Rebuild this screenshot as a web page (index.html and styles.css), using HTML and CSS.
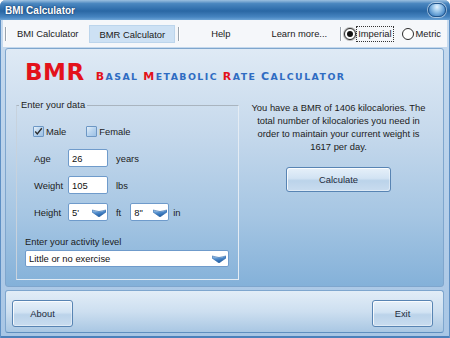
FILE: index.html
```html
<!DOCTYPE html>
<html>
<head>
<meta charset="utf-8">
<link rel="stylesheet" href="styles.css">
</head>
<body>
<div class="window">
  <div class="titlebar">
    <span class="title">BMI Calculator</span>
    <span class="close"></span>
  </div>
  <div class="menubar">
    <span class="sep first"></span>
    <span class="mitem">BMI Calculator</span>
    <span class="mitem tab">BMR Calculator</span>
    <span class="sep after-tab"></span>
    <span class="mitem help">Help</span>
    <span class="mitem learn">Learn more...</span>
    <span class="sep after-learn"></span>
    <span class="radio"><span class="rb checked"></span><span class="rl focus">Imperial</span></span>
    <span class="radio metric"><span class="rb"></span><span class="rl">Metric</span></span>
  </div>
  <div class="main">
    <div class="heading">
      <span class="big">BMR</span>
      <span class="sub"><span class="cap">B</span>ASAL <span class="cap">M</span>ETABOLIC <span class="cap">R</span>ATE <span class="cap blue">C</span>ALCULATOR</span>
    </div>
    <div class="content">
      <fieldset class="group">
        <legend>Enter your data</legend>
        <div class="checks">
          <span class="check"><span class="box"><svg width="11" height="11" viewBox="0 0 11 11"><polyline points="1.5,5.5 4,8.5 9.5,1.5" fill="none" stroke="#2b2b2b" stroke-width="1.6"/></svg></span>Male</span>
          <span class="check female"><span class="box"></span>Female</span>
        </div>
        <div class="fields">
          <span class="lbl">Age</span><span class="input">26</span><span class="unit">years</span>
          <span class="lbl">Weight</span><span class="input">105</span><span class="unit">lbs</span>
          <span class="lbl">Height</span>
          <span class="select"><span>5'</span><svg class="arrow" width="14" height="9" viewBox="0 0 14 9"><defs><linearGradient id="ag" x1="0" y1="0" x2="0.4" y2="1"><stop offset="0" stop-color="#a9cdf0"/><stop offset="0.5" stop-color="#4d89c9"/><stop offset="1" stop-color="#1d5aa0"/></linearGradient></defs><path d="M0,2 Q7,5 14,2 L14,4 L7,9 L0,4 Z" fill="url(#ag)" stroke="#2a64a6" stroke-width="0.6"/></svg></span>
          <span class="unit hrow">ft <span class="select small"><span>8"</span><svg class="arrow" width="14" height="9" viewBox="0 0 14 9"><path d="M0,2 Q7,5 14,2 L14,4 L7,9 L0,4 Z" fill="url(#ag)" stroke="#2a64a6" stroke-width="0.6"/></svg></span><span class="in">in</span></span>
        </div>
        <div class="activity">Enter your activity level</div>
        <span class="select wide"><span>Little or no exercise</span><svg class="arrow" width="14" height="9" viewBox="0 0 14 9"><path d="M0,2 Q7,5 14,2 L14,4 L7,9 L0,4 Z" fill="url(#ag)" stroke="#2a64a6" stroke-width="0.6"/></svg></span>
      </fieldset>
      <div class="result">
        <p class="text">You have a BMR of 1406 kilocalories. The<br>total number of kilocalories you need in<br>order to maintain your current weight is<br>1617 per day.</p>
        <button class="btn calc">Calculate</button>
      </div>
    </div>
  </div>
  <div class="footer">
    <button class="btn small-btn">About</button>
    <button class="btn small-btn">Exit</button>
  </div>
</div>
</body>
</html>
```
FILE: styles.css
```css
html, body {
  margin: 0;
  padding: 0;
}
body {
  width: 450px;
  height: 338px;
  overflow: hidden;
  background: #ffffff;
  font-family: "Liberation Sans", Arial, sans-serif;
  font-size: 9.4px;
  color: #1c1c1c;
}
.window {
  width: 450px;
  height: 338px;
  display: flex;
  flex-direction: column;
  background: linear-gradient(#c9dcef, #a8c6e5);
  border-radius: 6px 6px 0 0;
  box-shadow: inset 1px 0 #5f90c4, inset -1px 0 #5f90c4, inset 0 -2px #4c80ba;
  overflow: hidden;
}
.titlebar {
  height: 20px;
  flex: none;
  display: flex;
  align-items: center;
  justify-content: space-between;
  padding: 0 4px 0 5px;
  background: linear-gradient(#9cc0e0 0, #4a86bf 18%, #2f6dab 48%, #2a67a4 55%, #4684c0 85%, #6ba3d6 100%);
  border-radius: 6px 6px 0 0;
}
.title {
  color: #ffffff;
  font-weight: bold;
  font-size: 10px;
  text-shadow: 0 0 2px #173f6b, 0 0 1px #173f6b;
}
.close {
  width: 18px;
  height: 14px;
  box-sizing: border-box;
  border-radius: 7px;
  border: 1px solid #21548b;
  background: radial-gradient(ellipse at 50% 25%, #e4f2fd 0, #9cc8ec 35%, #4f8dc9 75%, #2e69a8 100%);
  box-shadow: 0 0 0 1px rgba(255, 255, 255, 0.5);
}
.menubar {
  height: 27px;
  flex: none;
  margin: 0 3px;
  padding-left: 2px;
  display: flex;
  align-items: center;
  background: #f5f7fa;
}
.sep {
  width: 1px;
  height: 14px;
  background: #9aa3ad;
  box-shadow: 1px 0 #ffffff;
}
.sep.first { margin-right: 11px; }
.sep.after-tab { margin-left: 3px; }
.sep.after-learn { margin-left: 13px; }
.mitem {
  white-space: nowrap;
  color: #1a1a1a;
}
.tab {
  margin-left: 11px;
  height: 18px;
  line-height: 18px;
  padding: 0 9px;
  box-sizing: border-box;
  background: #cde1f4;
  border: 1px solid #bcd5ec;
}
.help { margin-left: 32px; }
.learn { margin-left: 41px; }
.radio {
  display: flex;
  align-items: center;
  margin-left: 3px;
}
.radio.metric { margin-left: 9px; }
.rb {
  width: 12px;
  height: 12px;
  box-sizing: border-box;
  border-radius: 50%;
  border: 1px solid #2b2b2b;
  background: #ffffff;
  display: flex;
  align-items: center;
  justify-content: center;
}
.rb.checked {
  box-shadow: 0 0 0 1px #b9b9b9;
}
.rb.checked::after {
  content: "";
  width: 6px;
  height: 6px;
  border-radius: 50%;
  background: #111111;
}
.rl {
  margin-left: 1px;
  padding: 1px 1px;
  line-height: 12px;
}
.rl.focus {
  outline: 1px dotted #333333;
}
.main {
  flex: none;
  height: 239px;
  margin: 1px 6px 0 5px;
  box-sizing: border-box;
  border: 1px solid #7fa6cd;
  border-radius: 3px;
  background: linear-gradient(#dfeaf5 0, #c6d9ec 35%, #a6c6e3 70%, #84b1d9 100%);
}
.heading {
  display: flex;
  align-items: baseline;
  height: 22px;
  line-height: 22px;
  margin: 12px 0 0 19px;
}
.big {
  font-family: "DejaVu Sans", sans-serif;
  font-weight: bold;
  font-size: 23px;
  letter-spacing: 0.5px;
  color: #e3121b;
}
.sub {
  margin-left: 11px;
  font-family: "DejaVu Sans", sans-serif;
  font-weight: bold;
  font-size: 9.4px;
  letter-spacing: 1.45px;
  color: #2f6cc2;
}
.sub .cap {
  font-size: 11px;
  color: #e3121b;
}
.sub .cap.blue {
  color: #2f6cc2;
}
.content {
  display: flex;
  margin-top: 16px;
}
.group {
  margin: 0 0 0 10px;
  padding: 0 0 12px 0;
  width: 223px;
  box-sizing: border-box;
  border: 1px solid #e4ecf4;
  border-top-color: #a9b4bf;
  border-left-color: #c7d2dd;
  min-width: 0;
}
.group legend {
  margin-left: 2px;
  padding: 0 2px;
  line-height: 12px;
}
.checks {
  display: flex;
  align-items: center;
  height: 12px;
  margin-top: 14px;
  padding-left: 16px;
}
.check {
  display: flex;
  align-items: center;
}
.check.female {
  margin-left: 20px;
}
.box {
  width: 11px;
  height: 11px;
  box-sizing: border-box;
  margin-right: 2px;
  border: 1px solid #6d97c4;
  border-radius: 1px;
  background: linear-gradient(135deg, #e4f0fa 0, #b7d3ee 50%, #9dc1e5 100%);
  display: flex;
  align-items: center;
  justify-content: center;
}
.box svg {
  display: block;
}
.fields {
  display: grid;
  grid-template-columns: 26px 40px auto;
  grid-auto-rows: 18px;
  column-gap: 8px;
  row-gap: 9px;
  align-items: center;
  margin-top: 12px;
  padding-left: 17px;
}
.input, .select {
  height: 18px;
  box-sizing: border-box;
  background: #ffffff;
  border: 1px solid #6f9bcb;
  border-radius: 2px;
  display: flex;
  align-items: center;
  padding-left: 3px;
  color: #111111;
}
.select {
  justify-content: space-between;
  padding-right: 1px;
}
.arrow {
  display: block;
  flex: none;
}
.hrow {
  display: flex;
  align-items: center;
}
.select.small {
  width: 39px;
  margin-left: 9px;
}
.in {
  margin-left: 4px;
}
.activity {
  margin-top: 15px;
  padding-left: 8px;
  line-height: 12px;
}
.select.wide {
  margin: 2px 0 0 8px;
  width: 204px;
  height: 17px;
  padding-right: 2px;
}
.result {
  flex: 1;
  display: flex;
  flex-direction: column;
  align-items: center;
  padding: 2px 5px 0 0;
}
.text {
  margin: 0;
  line-height: 13px;
  text-align: center;
  white-space: nowrap;
}
.btn {
  font-family: "Liberation Sans", Arial, sans-serif;
  font-size: 9.4px;
  color: #1e2b3c;
  border: 1px solid #5884b3;
  border-radius: 3px;
  background: linear-gradient(#e6f0f9 0, #d2e3f3 45%, #bbd3ea 55%, #c9dcef 100%);
  box-shadow: inset 1px 1px 0 rgba(255, 255, 255, 0.8), inset -1px -1px 0 rgba(255, 255, 255, 0.4);
  padding: 0;
}
.calc {
  margin-top: 14px;
  width: 105px;
  height: 25px;
}
.footer {
  flex: none;
  height: 43px;
  margin: 3px 6px 0 5px;
  box-sizing: border-box;
  border: 1px solid #7ea6ce;
  border-bottom-color: #5f8ebe;
  border-radius: 3px;
  background: linear-gradient(#e2edf7 0, #cddff0 50%, #a9c7e3 100%);
  display: flex;
  justify-content: space-between;
  align-items: flex-start;
  padding: 9px 10px 0 6px;
}
.small-btn {
  width: 61px;
  height: 27px;
}
```
